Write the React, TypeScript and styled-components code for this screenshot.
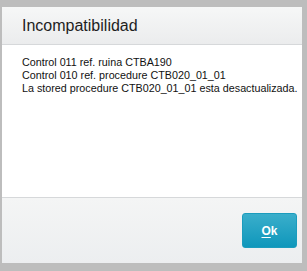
import React from "react";
import styled, { createGlobalStyle } from "styled-components";

const Global = createGlobalStyle`
  html, body { margin: 0; padding: 0; background: #bdbdbd; }
  body { font-family: "Liberation Sans", Arial, sans-serif; }
`;

const Screen = styled.div`
  width: 307px;
  height: 271px;
  box-sizing: border-box;
  padding: 7px 5px 8px 2px;
  background: #bdbdbd;
`;

const Dialog = styled.div`
  height: 100%;
  display: flex;
  flex-direction: column;
  background: #ffffff;
  overflow: hidden;
`;

const Header = styled.div`
  height: 38px;
  box-sizing: border-box;
  padding: 0 0 0 20px;
  display: flex;
  align-items: center;
  background: linear-gradient(#f6f7f7, #ebeced);
  border-bottom: 1px solid #d6d8da;
`;

const Title = styled.h1`
  margin: 0;
  font-size: 16px;
  font-weight: normal;
  color: #1e1e1e;
`;

const Body = styled.div`
  flex: 1;
  padding: 11px 0 0 20px;
  font-size: 10.75px;
  line-height: 13px;
  color: #111;
  white-space: nowrap;
`;

const Line = styled.div``;

const Footer = styled.div`
  height: 66px;
  box-sizing: border-box;
  border-top: 1px solid #d6d8da;
  background: linear-gradient(#f4f5f5, #eceef0);
  display: flex;
  justify-content: flex-end;
  align-items: flex-start;
  padding: 15px 5px 0 0;
`;

const OkButton = styled.button`
  width: 55px;
  height: 35px;
  border: 1px solid #1b9cbd;
  border-radius: 3px;
  background: linear-gradient(#3aaecb, #0f97bb);
  color: #ffffff;
  font-family: "Liberation Sans", Arial, sans-serif;
  font-weight: bold;
  font-size: 12px;
  padding: 0;
  cursor: pointer;
  u { text-decoration: underline; text-underline-offset: 2px; }
`;

export default function App() {
  return (
    <>
      <Global />
      <Screen>
        <Dialog>
          <Header>
            <Title>Incompatibilidad</Title>
          </Header>
          <Body>
            <Line>Control 011 ref. ruina CTBA190</Line>
            <Line>Control 010 ref. procedure CTB020_01_01</Line>
            <Line>La stored procedure CTB020_01_01 esta desactualizada.</Line>
          </Body>
          <Footer>
            <OkButton>
              <u>O</u>k
            </OkButton>
          </Footer>
        </Dialog>
      </Screen>
    </>
  );
}
